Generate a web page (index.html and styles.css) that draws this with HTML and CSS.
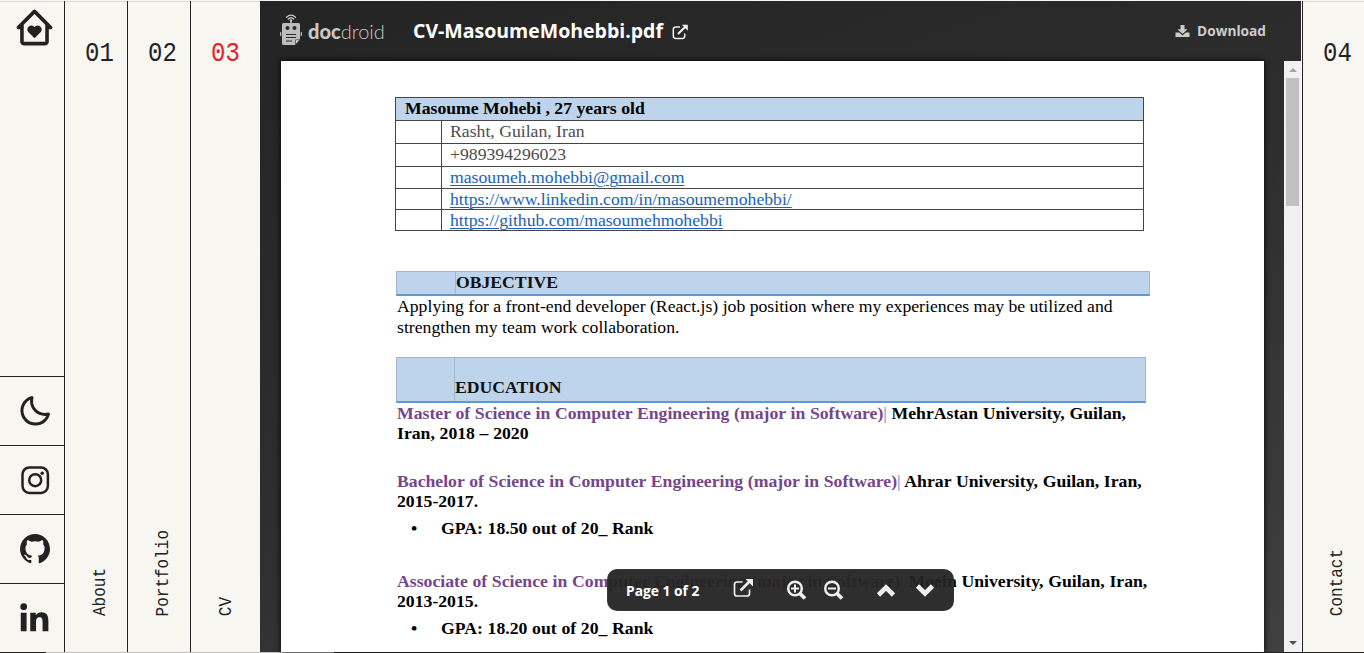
FILE: index.html
```html
<!DOCTYPE html>
<html lang="en">
<head>
<meta charset="utf-8">
<title>CV</title>
<link rel="stylesheet" href="styles.css">
</head>
<body>
<div class="app">
  <nav class="rail">
    <a class="home"><svg width="43" height="43" viewBox="0 0 24 24"><path d="M12.223 11.641l-.223.22-.224-.22a2.224 2.224 0 0 0-3.125 0 2.13 2.13 0 0 0 0 3.07L12 18l3.349-3.289a2.13 2.13 0 0 0 0-3.07 2.225 2.225 0 0 0-3.126 0z"/><path d="m21.707 11.293-9-9a.999.999 0 0 0-1.414 0l-9 9A1 1 0 0 0 3 13h1v7c0 1.103.897 2 2 2h12c1.103 0 2-.897 2-2v-7h1a1 1 0 0 0 .707-1.707zM18.001 20H6v-9.585l6-6 6 6V15l.001 5z"/></svg></a>
    <a class="cell"><svg width="36" height="36" viewBox="0 0 24 24"><path d="M20.742 13.045a8.088 8.088 0 0 1-2.077.271c-2.135 0-4.14-.83-5.646-2.336a8.025 8.025 0 0 1-2.064-7.723A1 1 0 0 0 9.73 2.034a10.014 10.014 0 0 0-4.489 2.582c-3.898 3.898-3.898 10.243 0 14.143a9.937 9.937 0 0 0 7.072 2.93 9.93 9.93 0 0 0 7.07-2.929 10.007 10.007 0 0 0 2.583-4.491 1.001 1.001 0 0 0-1.224-1.224zm-2.772 4.301a7.947 7.947 0 0 1-5.656 2.343 7.953 7.953 0 0 1-5.658-2.344c-3.118-3.119-3.118-8.195 0-11.314a7.923 7.923 0 0 1 2.06-1.483 10.027 10.027 0 0 0 2.89 7.848 9.972 9.972 0 0 0 7.848 2.891 8.036 8.036 0 0 1-1.484 2.059z"/></svg></a>
    <a class="cell"><svg width="36" height="36" viewBox="0 0 36 36"><rect x="5.5" y="5.5" width="25.400" height="25.400" rx="6.8" fill="none" stroke="#222" stroke-width="2.5"/><circle cx="18.2" cy="18.2" r="6" fill="none" stroke="#222" stroke-width="2.5"/><circle cx="25.2" cy="11.2" r="1.8"/></svg></a>
    <a class="cell"><svg width="36" height="36" viewBox="0 0 24 24"><path d="M12.026 2c-5.509 0-9.974 4.465-9.974 9.974 0 4.406 2.857 8.145 6.821 9.465.499.09.679-.217.679-.481 0-.237-.008-.865-.011-1.696-2.775.602-3.361-1.338-3.361-1.338-.452-1.152-1.107-1.459-1.107-1.459-.905-.619.069-.605.069-.605 1.002.07 1.527 1.028 1.527 1.028.89 1.524 2.336 1.084 2.902.829.091-.645.351-1.085.635-1.334-2.214-.251-4.542-1.107-4.542-4.93 0-1.087.389-1.979 1.024-2.675-.101-.253-.446-1.268.099-2.64 0 0 .837-.269 2.742 1.021a9.582 9.582 0 0 1 2.496-.336 9.554 9.554 0 0 1 2.496.336c1.906-1.291 2.742-1.021 2.742-1.021.545 1.372.203 2.387.099 2.64.64.696 1.024 1.587 1.024 2.675 0 3.833-2.33 4.675-4.552 4.922.355.308.675.916.675 1.846 0 1.334-.012 2.41-.012 2.737 0 .267.178.577.687.479C19.146 20.115 22 16.379 22 11.974 22 6.465 17.535 2 12.026 2z"/></svg></a>
    <a class="cell"><svg width="37" height="37" viewBox="0 0 24 24"><circle cx="4.983" cy="5.009" r="2.188"/><path d="M9.237 8.855v12.139h3.769v-6.003c0-1.584.298-3.118 2.262-3.118 1.937 0 1.961 1.811 1.961 3.218v5.904H21v-6.657c0-3.27-.704-5.783-4.526-5.783-1.835 0-3.065 1.007-3.568 1.96h-.051v-1.66H9.237zm-6.142 0H6.87v12.139H3.095z"/></svg></a>
  </nav>
  <a class="tab"><span class="num">01</span><span class="label">About</span></a>
  <a class="tab"><span class="num">02</span><span class="label">Portfolio</span></a>
  <a class="tab active"><span class="num">03</span><span class="label">CV</span></a>
  <main class="viewer">
    <header class="bar">
      <svg class="robot" width="22" height="32" viewBox="0 0 22 32">
        <g fill="none" stroke="#c8c8c8" stroke-width="1.3" stroke-linecap="round"><path d="M6.5 3.2Q11 -1 15.5 3.2M8.3 5Q11 2.4 13.7 5"/></g>
        <circle cx="11" cy="6.4" r="1.2" fill="#c8c8c8"/><path d="M10.3 6h1.4v4h-1.4z" fill="#c8c8c8"/>
        <path d="M3.500 9h15a1.500 1.500 0 0 1 1.500 1.500V25l-5 6H3.500A1.500 1.500 0 0 1 2 29.500v-19A1.500 1.500 0 0 1 3.500 9zM0 18.500l1.300-1v5L0 21.500zM22 18.500l-1.300-1v5l1.300-1z" fill="#bdbdbd"/>
        <path d="M15.500 30.500v-4.700h4.300z" fill="#ddd" stroke="#333" stroke-width=".7"/>
        <circle cx="7.500" cy="14" r="2" fill="#2a2a2a"/><circle cx="14.500" cy="14" r="2" fill="#2a2a2a"/>
        <path d="M6 20.500h10M6 23.500h10M6 27h6" stroke="#2a2a2a" stroke-width="1.200"/>
      </svg>
      <span class="brand"><b>doc</b>droid</span>
      <span class="title">CV-MasoumeMohebbi.pdf</span>
      <svg class="ext" width="16" height="16" viewBox="0 0 16 16"><path d="M8 3H3.500A2.200 2.200 0 0 0 1.300 5.200v7A2.200 2.200 0 0 0 3.500 14.400h7a2.200 2.200 0 0 0 2.200-2.200V9.500" fill="none" stroke="#eee" stroke-width="1.500"/><path d="M6 10l7-7" stroke="#eee" stroke-width="2.200"/><path d="M9.800.7H15.800v6z" fill="#eee"/></svg>
      <span class="download"><svg width="15" height="14" viewBox="0 0 15 14"><path d="M5.500 1h4v4.200h3L7.500 10 2.500 5.200h3z" /><path d="M.5 8.500h3.700L7.500 11.500l3.300-3h3.700v4.500H.5z"/></svg>Download</span>
    </header>
    <div class="body">
      <article class="page">
        <table class="contact">
          <colgroup><col class="mark"><col></colgroup>
          <tr class="name"><td colspan="2">Masoume Mohebi , 27 years old</td></tr>
          <tr><td></td><td>Rasht, Guilan, Iran</td></tr>
          <tr><td></td><td>+989394296023</td></tr>
          <tr class="r22"><td></td><td><u>masoumeh.mohebbi@gmail.com</u></td></tr>
          <tr class="r21"><td></td><td><u>https://www.linkedin.com/in/masoumemohebbi/</u></td></tr>
          <tr class="r21"><td></td><td><u>https://github.com/masoumehmohebbi</u></td></tr>
        </table>
        <h2 class="objective"><span>OBJECTIVE</span></h2>
        <p class="intro">Applying for a front-end developer (React.js) job position where my experiences may be utilized and<br>strengthen my team work collaboration.</p>
        <h2 class="education"><span>EDUCATION</span></h2>
        <p class="deg"><em>Master of Science in Computer Engineering (major in Software)<i>|</i></em> MehrAstan University, Guilan,<br>Iran, 2018 – 2020</p>
        <p class="deg second"><em>Bachelor of Science in Computer Engineering (major in Software)<i>|</i></em> Ahrar University, Guilan, Iran,<br>2015-2017.</p>
        <p class="gpa"><span>•</span>GPA: 18.50 out of 20_ Rank</p>
        <p class="deg third"><em>Associate of Science in Computer Engineering (major in Software)<i>|</i></em> Moein University, Guilan, Iran,<br>2013-2015.</p>
        <p class="gpa"><span>•</span>GPA: 18.20 out of 20_ Rank</p>
      </article>
      <div class="scroll"><i class="up"></i><i class="thumb"></i><i class="down"></i></div>
      <div class="tools">
        <span>Page 1 of 2</span>
        <svg width="340" height="42" viewBox="0 0 340 42" fill="none" stroke="#eee">
          <path d="M135.500 13h-5.500a2.500 2.500 0 0 0-2.500 2.500v9a2.500 2.500 0 0 0 2.500 2.500h10a2.500 2.500 0 0 0 2.500-2.500v-4" stroke-width="1.700"/><path d="M133.500 21.500l9-9" stroke-width="2.600"/><path d="M138.500 10h7.500v7.500z" fill="#eee" stroke="none"/>
          <circle cx="188" cy="19.500" r="6.800" stroke-width="2.500"/><path d="M193 24.500l5 5" stroke-width="3.800"/><path d="M184 19.500h8M188 15.500v8" stroke-width="2"/>
          <circle cx="225" cy="19.500" r="6.800" stroke-width="2.500"/><path d="M230 24.500l5 5" stroke-width="3.800"/><path d="M221 19.500h8" stroke-width="2.200"/>
          <path d="M271.500 26l7.500-7.500 7.500 7.500M310.500 17l7.500 7.500 7.500-7.500" stroke-width="4.600"/>
        </svg>
      </div>
    </div>
  </main>
  <a class="tab last"><span class="num">04</span><span class="label">Contact</span></a>
</div>
</body>
</html>
```
FILE: styles.css
```css
* { box-sizing: border-box; }
body { margin: 0; background: #f7f6f1; color: #222; overflow: hidden; }
.app {
  display: flex; width: 1364px; height: 653px;
  border-top: 1px solid #d8dcdc; border-bottom: 1px solid;
  border-image: linear-gradient(90deg, #222 47px, #c0c0c0 47px, #c0c0c0 335px, #222 335px) 1;
  border-image-width: 0 0 1px 0;
  box-shadow: inset 0 1px #d8dcdc;
}
.rail { width: 65px; border-right: 1px solid #222; display: flex; flex-direction: column; }
.rail svg { display: block; fill: #222; flex: none; }
.home { flex: 1; display: flex; justify-content: center; padding: 5px 0 0 5px; }
.cell { height: 69px; border-top: 1px solid #222; display: flex; align-items: center; justify-content: center; padding: 0 0 1px 5px; }
.tab {
  width: 63px; border-right: 1px solid #222; display: flex; flex-direction: column;
  justify-content: space-between; padding: 38px 0 36px 20px;
}
.num { font: 24px/30px "Liberation Mono", monospace; transform: scaleY(1.12); }
.label { font: 16px/30px "Liberation Mono", monospace; writing-mode: vertical-rl; transform: rotate(180deg) scaleX(1.1); width: 30px; margin-left: 1px; }
.active { width: 69px; border: 0; }
.active .num { color: #e3202f; }
.last { width: 62px; border-right: 0; border-left: 1px solid #222; }
.last .label { margin-left: 0; }

.viewer { width: 1042px; border-right: 1px solid #fff; background: linear-gradient(160deg, #242424, #2e2e2e 50%, #404040); display: flex; flex-direction: column; }
.bar { height: 60px; display: flex; align-items: center; padding: 0 35px 0 20px; color: #fff; flex: none; }
.robot { margin-top: -3px; }
.brand { width: 76px; margin: 0 29px 0 6px; font: 300 20px/30px Lato, sans-serif; color: #c8c8c8; white-space: nowrap; }
.brand b { font-weight: 900; }
.title { font: 700 19.5px/30px "Open Sans", sans-serif; }
.ext { margin: 2px 0 0 9px; }
.download { margin-left: auto; display: flex; align-items: center; gap: 7px; font: 700 13.7px/20px "Open Sans", sans-serif; color: #ccc; }
.download svg { fill: #ccc; }
.body { position: relative; flex: 1; display: flex; justify-content: space-between; padding-left: 21px; min-height: 0; }
.scroll { width: 17px; background: #f1f1f1; display: flex; flex-direction: column; align-items: center; padding: 7px 0 7px; }
.up { border: 4px solid transparent; border-top: 0; border-bottom-color: #a3a3a3; }
.thumb { width: 13px; height: 128px; margin-top: 6px; background: #c1c1c1; }
.down { margin-top: auto; border: 4px solid transparent; border-bottom: 0; border-top-color: #505050; }

.page {
  width: 983px; background: #fff; overflow: hidden; padding: 36px 0 0 115px;
  box-shadow: 0 0 6px #000; color: #000; font: 17.7px/20px "Liberation Serif", serif;
}
.page p, .page h2 { margin: 0; white-space: nowrap; }
.contact { width: 749px; border-collapse: collapse; table-layout: fixed; color: #4d4d4d; margin-left: -1px; }
.mark { width: 46px; }
.contact td { border: 1px solid #444; padding: 0 8px 1px; height: 23px; line-height: 19px; }
.contact .r22 td { height: 22px; line-height: 18px; padding-bottom: 2px; }
.contact .r21 td { height: 21px; line-height: 18px; }
.contact u { color: #1a62b8; text-decoration-thickness: 1px; text-underline-offset: 2px; }
.contact .name td { padding-left: 9px; }
.name { background: #bdd4ec; color: #000; font-weight: bold; }
.page h2 { font-size: 17.67px; line-height: 20px; color: #111; background: #bdd4ec; border: 1px solid #a3b7cc; border-bottom: 2px solid #5b9bd5; padding-left: 58px; display: flex; }
.page h2 span { border-left: 1px solid #a3b7cc; flex: 1; }
.page .objective { width: 754px; height: 25px; margin-top: 40px; }
.page .education { width: 750px; height: 46px; margin: 19px 0 0; padding-left: 57px; }
.page .education span { padding-top: 19px; }
.intro { line-height: 21px; padding-left: 1px; }
.deg, .gpa { font-weight: bold; padding-left: 1px; word-spacing: .28px; }
.deg em { color: #74468c; font-style: normal; }
.deg i { font-style: normal; font-weight: normal; color: #6f7fc0; }
.second { padding-top: 28px; }
.third { padding-top: 33px; }
.gpa { padding: 7px 0 0 15px; }
.gpa span { display: inline-block; width: 30px; }

.tools {
  position: absolute; left: 347px; top: 508px; width: 347px; height: 42px; border-radius: 10px;
  background: rgba(35, 35, 35, .95); color: #fff; border: 1px solid rgba(60, 60, 60, .7); overflow: hidden;
}
.tools span { position: absolute; left: 18px; top: 11px; font: 700 13.8px/20px "Open Sans", sans-serif; }
.tools svg { position: absolute; left: -1px; top: -1px; }
```
